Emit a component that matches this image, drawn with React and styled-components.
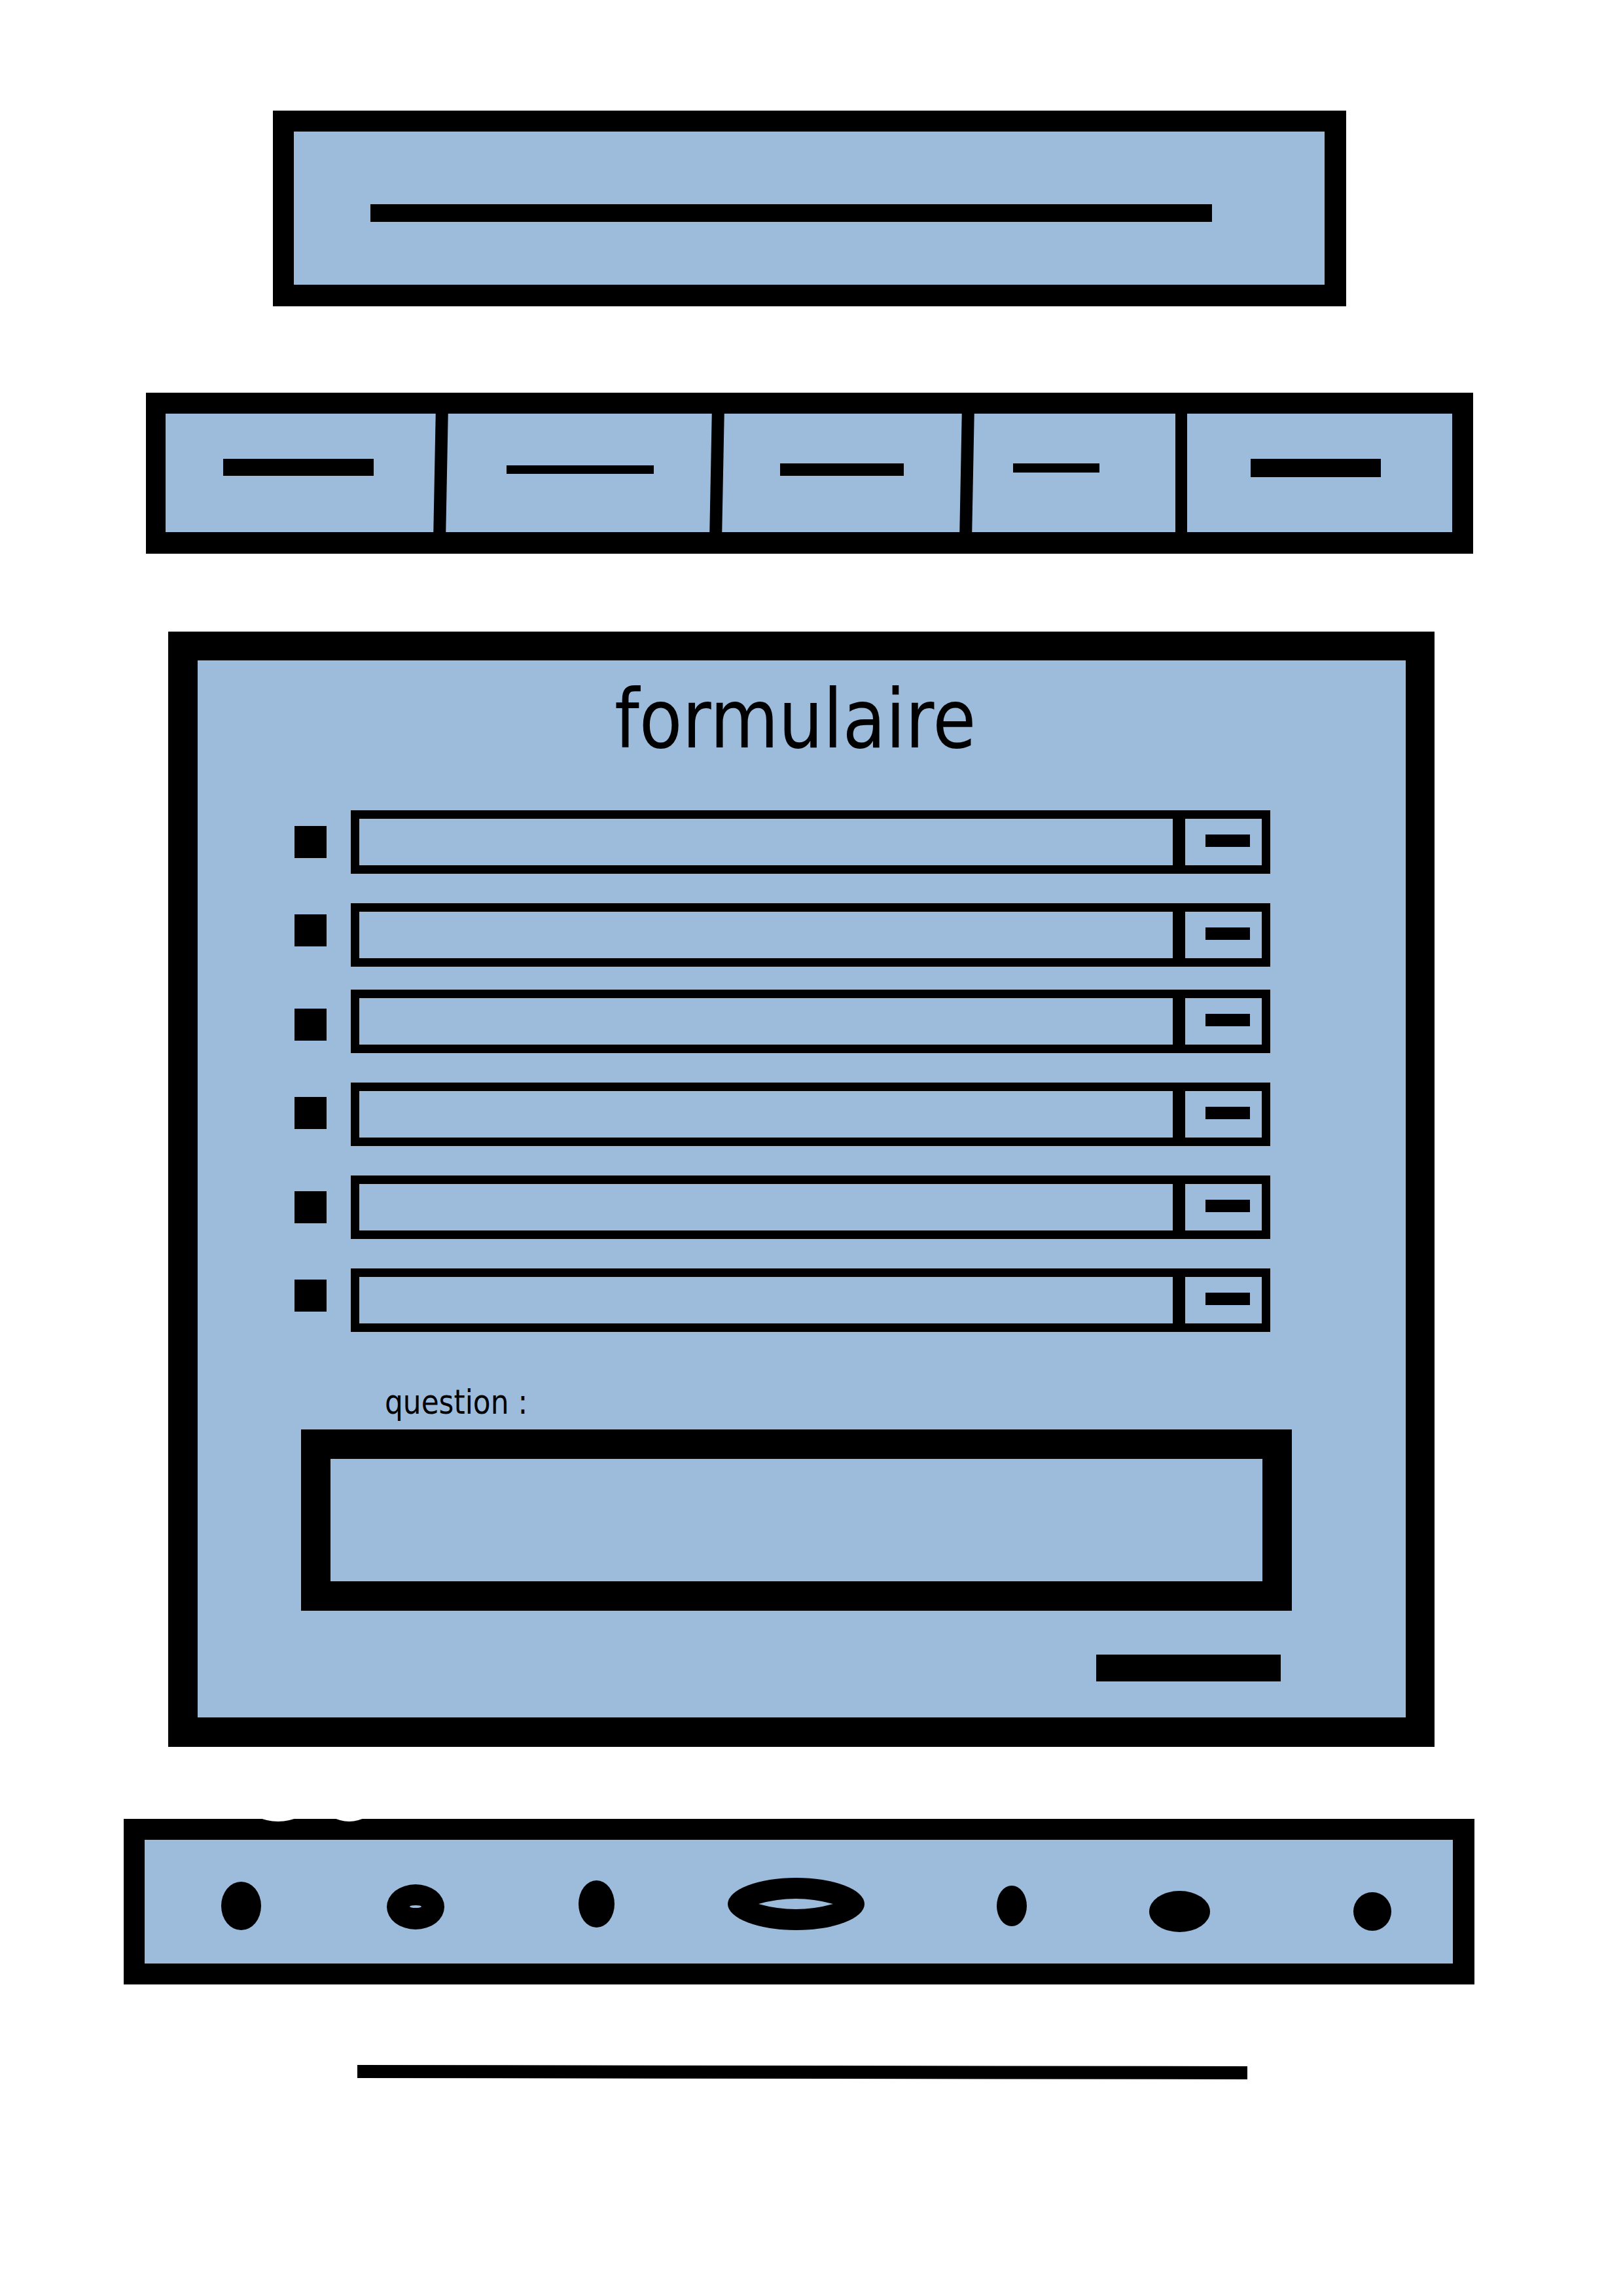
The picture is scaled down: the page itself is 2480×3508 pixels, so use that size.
import React from "react";
import styled, { createGlobalStyle } from "styled-components";

const BLUE = "#9dbbdb";
const INK = "#000";

const GlobalStyle = createGlobalStyle`
  html, body {
    margin: 0;
    padding: 0;
    background: #fff;
  }
  body {
    font-family: "DejaVu Sans", "Liberation Sans", sans-serif;
    color: ${INK};
  }
  * { box-sizing: border-box; }
`;

const Page = styled.div`
  width: 2480px;
  min-height: 3508px;
  display: flex;
  flex-direction: column;
  align-items: flex-start;
  background: #fff;
`;

/* ---------- header ---------- */
const HeaderBox = styled.header`
  margin: 169px 0 0 417px;
  width: 1640px;
  height: 299px;
  border-style: solid;
  border-color: ${INK};
  border-width: 32px 33px 33px 32px;
  background: ${BLUE};
  padding: 111px 0 0 117px;
`;

const HeaderBar = styled.div`
  width: 1286px;
  height: 27px;
  background: ${INK};
`;

/* ---------- navigation ---------- */
const Nav = styled.nav`
  margin: 132px 0 0 223px;
  width: 2028px;
  height: 246px;
  border-style: solid;
  border-color: ${INK};
  border-width: 32px 32px 33px 30px;
  background: ${BLUE};
  display: flex;
`;

const NavCell = styled.div`
  width: ${(p) => p.$w}px;
  height: 100%;
  padding: ${(p) => p.$top}px 0 0 ${(p) => p.$left}px;
  flex: none;
`;

const NavDash = styled.div`
  width: ${(p) => p.$w}px;
  height: ${(p) => p.$h}px;
  background: ${INK};
`;

const NavDivider = styled.div`
  width: ${(p) => p.$w}px;
  height: 100%;
  flex: none;
  background: ${INK};
  transform: skewX(${(p) => p.$skew}deg);
`;

/* ---------- form ---------- */
const FormPanel = styled.section`
  margin: 119px 0 0 257px;
  width: 1935px;
  height: 1704px;
  border-style: solid;
  border-color: ${INK};
  border-width: 44px 44px 45px 45px;
  background: ${BLUE};
  display: flex;
  flex-direction: column;
  align-items: flex-start;
`;

const TitleRow = styled.div`
  align-self: stretch;
  display: flex;
  justify-content: center;
  padding-right: 19px;
  margin-top: 27px;
`;

const Title = styled.h1`
  margin: 0;
  font-family: "DejaVu Sans", sans-serif;
  font-weight: normal;
  font-size: 125px;
  line-height: 1;
  height: 125px;
  white-space: nowrap;
  transform: scaleX(0.86);
`;

const FieldList = styled.div`
  display: flex;
  flex-direction: column;
  margin: 77px 0 0 148px;
`;

const FieldRow = styled.div`
  display: flex;
  align-items: flex-start;
  gap: 37px;
  margin-top: ${(p) => p.$gap}px;
`;

const Bullet = styled.span`
  width: 49px;
  height: 49px;
  flex: none;
  background: ${INK};
  margin-top: ${(p) => p.$offset}px;
`;

const Field = styled.div`
  width: 1405px;
  height: 97px;
  border: 13px solid ${INK};
  display: flex;
`;

const FieldInput = styled.div`
  flex: 1;
`;

const FieldDivider = styled.div`
  width: 19px;
  flex: none;
  background: ${INK};
`;

const FieldButton = styled.div`
  width: 117px;
  flex: none;
  padding: 24px 0 0 31px;
`;

const Minus = styled.div`
  width: 68px;
  height: 19px;
  background: ${INK};
`;

const QuestionLabel = styled.label`
  display: block;
  margin: 82px 0 0 286px;
  font-family: "DejaVu Sans", sans-serif;
  font-size: 51px;
  line-height: 1;
  height: 51px;
  white-space: nowrap;
  transform: scaleX(0.86);
  transform-origin: left center;
`;

const TextArea = styled.div`
  margin: 16px 0 0 158px;
  width: 1514px;
  height: 277px;
  border: 45px solid ${INK};
  background: ${BLUE};
`;

const SubmitBar = styled.div`
  margin: 67px 0 0 1373px;
  width: 282px;
  height: 41px;
  background: ${INK};
`;

/* ---------- footer ---------- */
const Footer = styled.footer`
  position: relative;
  margin: 110px 0 0 189px;
  width: 2064px;
  height: 253px;
  border-style: solid;
  border-color: ${INK};
  border-width: 32px 33px 32px 32px;
  background: ${BLUE};
`;

/* small white smudges biting into the footer's top border */
const Nick = styled.span`
  position: absolute;
  top: ${(p) => p.$top}px;
  left: ${(p) => p.$left}px;
  width: ${(p) => p.$w}px;
  height: ${(p) => p.$h}px;
  border-radius: 50%;
  background: #fff;
`;

const BlobStrip = styled.svg`
  display: block;
  width: 1999px;
  height: 189px;
`;

const BottomLine = styled.div`
  margin: 124px 0 0 546px;
  width: 1360px;
  height: 20px;
  background: ${INK};
  transform: rotate(0.08deg);
`;

const navCells = [
  { w: 411, left: 88, top: 69, dw: 230, dh: 26 },
  { w: 403, left: 91, top: 79, dw: 225, dh: 13 },
  { w: 363, left: 87, top: 76, dw: 189, dh: 19 },
  { w: 309, left: 61, top: 76, dw: 132, dh: 14 },
  { w: 405, left: 97, top: 69, dw: 199, dh: 28 },
];
const navDividers = [
  { w: 19, skew: -1.1 },
  { w: 19, skew: -1.1 },
  { w: 19, skew: -1.1 },
  { w: 18, skew: 0 },
];

const rows = [
  { gap: 0, bullet: 24 },
  { gap: 45, bullet: 17 },
  { gap: 35, bullet: 29 },
  { gap: 45, bullet: 22 },
  { gap: 45, bullet: 24 },
  { gap: 45, bullet: 17 },
];

export default function App() {
  return (
    <>
      <GlobalStyle />
      <Page>
        <HeaderBox>
          <HeaderBar />
        </HeaderBox>

        <Nav>
          {navCells.map((c, i) => (
            <React.Fragment key={i}>
              <NavCell $w={c.w} $left={c.left} $top={c.top}>
                <NavDash $w={c.dw} $h={c.dh} />
              </NavCell>
              {i < navDividers.length && (
                <NavDivider $w={navDividers[i].w} $skew={navDividers[i].skew} />
              )}
            </React.Fragment>
          ))}
        </Nav>

        <FormPanel>
          <TitleRow>
            <Title>formulaire</Title>
          </TitleRow>
          <FieldList>
            {rows.map((r, i) => (
              <FieldRow key={i} $gap={r.gap}>
                <Bullet $offset={r.bullet} />
                <Field>
                  <FieldInput />
                  <FieldDivider />
                  <FieldButton>
                    <Minus />
                  </FieldButton>
                </Field>
              </FieldRow>
            ))}
          </FieldList>
          <QuestionLabel>question :</QuestionLabel>
          <TextArea />
          <SubmitBar />
        </FormPanel>

        <Footer>
          <Nick $left={159} $top={-80} $w={90} $h={52} />
          <Nick $left={276} $top={-78} $w={73} $h={50} />
          <BlobStrip viewBox="0 0 1999 189">
            <ellipse cx="147.5" cy="101" rx="30.5" ry="37" fill={INK} />
            <ellipse cx="414" cy="102.5" rx="44" ry="34.5" fill={INK} />
            <ellipse cx="414" cy="102" rx="9" ry="2" fill={BLUE} />
            <ellipse cx="690.5" cy="98" rx="27.5" ry="36" fill={INK} />
            <ellipse cx="995.5" cy="98" rx="104.5" ry="40" fill={INK} />
            <path d="M938 98 Q995 82 1052 98 Q995 114 938 98 Z" fill={BLUE} />
            <ellipse cx="1325" cy="101" rx="23" ry="31" fill={INK} />
            <ellipse cx="1581.5" cy="109.5" rx="46.5" ry="31.5" fill={INK} />
            <ellipse cx="1876" cy="109.5" rx="29" ry="29.5" fill={INK} />
          </BlobStrip>
        </Footer>

        <BottomLine />
      </Page>
    </>
  );
}
